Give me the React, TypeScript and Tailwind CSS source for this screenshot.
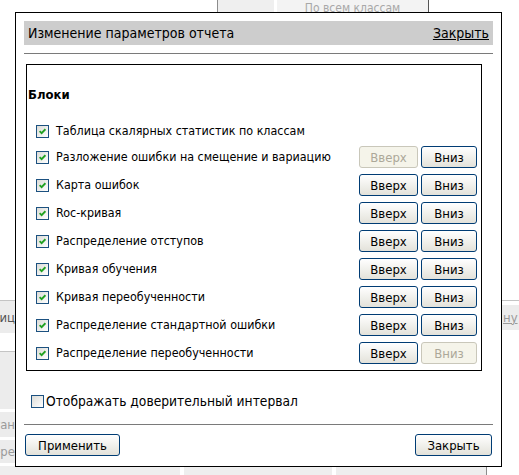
import clsx from "clsx";

type Block = {
  label: string;
  buttons: boolean;
  upDisabled?: boolean;
  downDisabled?: boolean;
};

const blocks: Block[] = [
  { label: "Таблица скалярных статистик по классам", buttons: false },
  { label: "Разложение ошибки на смещение и вариацию", buttons: true, upDisabled: true },
  { label: "Карта ошибок", buttons: true },
  { label: "Roc-кривая", buttons: true },
  { label: "Распределение отступов", buttons: true },
  { label: "Кривая обучения", buttons: true },
  { label: "Кривая переобученности", buttons: true },
  { label: "Распределение стандартной ошибки", buttons: true },
  { label: "Распределение переобученности", buttons: true, downDisabled: true },
];

function CheckBox({ checked }: { checked: boolean }) {
  return (
    <span className="flex h-[13px] w-[13px] shrink-0 items-center justify-center border border-[#1c5180] bg-linear-to-br from-[#dcdcd7] to-white">
      {checked && (
        <svg width="7" height="7" viewBox="0 0 7 7">
          <path d="M0.6 3.2 L2.6 5.2 L6.4 1.2" stroke="#21a121" strokeWidth="1.8" fill="none" />
        </svg>
      )}
    </span>
  );
}

function XpButton({ label, disabled, className }: { label: string; disabled?: boolean; className: string }) {
  return (
    <button
      className={clsx(
        "flex h-[22px] items-center justify-center rounded-[3px] border text-[13px] leading-none",
        disabled
          ? "border-[#c9c7ba] bg-[#f5f4ea] text-[#aca899]"
          : "border-[#003c74] bg-linear-to-b from-white to-[#e3e2da] text-black",
        className
      )}
    >
      {label}
    </button>
  );
}

function Background() {
  return (
    <div className="flex h-full flex-col">
      <div className="flex h-[12px] shrink-0">
        <div className="w-[217px]" />
        <div className="w-px bg-[#8c8c8c]" />
        <div className="w-[56px] bg-[#efefef]" />
        <div className="w-[3px]" />
        <div className="flex w-[151px] justify-center overflow-hidden bg-[#f3f3f3] pt-[1px] text-[12px] leading-[14px] text-[#a8a8a8]">
          По всем классам
        </div>
        <div className="w-px bg-[#555555]" />
      </div>
      <div className="flex flex-1">
        <div className="flex w-[15px] flex-col">
          <div className="h-[288px]" />
          <div className="h-px bg-[#c4c4c4]" />
          <div className="flex h-[32px] items-center justify-end overflow-hidden whitespace-nowrap bg-[#ececec] pt-[2px] text-[13px] text-[#555555]">
            Таблиц
          </div>
          <div className="h-[18px]" />
          <div className="h-px bg-[#c4c4c4]" />
          <div className="h-[57px] bg-[#ececec]" />
          <div className="h-[3px]" />
          <div className="flex h-[25px] items-center justify-end overflow-hidden whitespace-nowrap bg-[#ececec] text-[13px] text-[#9a9a9a]">
            Стан
          </div>
          <div className="h-[3px]" />
          <div className="flex h-[23px] items-center justify-end overflow-hidden whitespace-nowrap bg-[#ececec] text-[13px] text-[#9a9a9a]">
            пере
          </div>
        </div>
        <div className="flex-1" />
        <div className="flex w-[18px] flex-col">
          <div className="h-[288px]" />
          <div className="h-px bg-[#c4c4c4]" />
          <div className="h-[4px]" />
          <div className="flex h-[25px] items-center overflow-hidden whitespace-nowrap bg-[#ececec] pl-[2px] text-[13px] text-[#9a9a9a] underline">
            ну
          </div>
        </div>
      </div>
      <div className="flex h-[9px] shrink-0">
        <div className="w-[180px] bg-[#eeeeee]" />
        <div className="w-[4px]" />
        <div className="w-[148px] bg-[#eeeeee]" />
        <div className="w-[4px]" />
        <div className="w-[150px] bg-[#eeeeee]" />
        <div className="w-px bg-[#8c8c8c]" />
      </div>
    </div>
  );
}

export default function App() {
  return (
    <div className="relative h-[475px] w-[519px] overflow-hidden bg-white font-['DejaVu_Sans',sans-serif] text-[12.4px] text-black [font-stretch:condensed]">
      <Background />

      <div className="absolute left-[15px] top-[12px] flex h-[455px] w-[487px] flex-col border border-black bg-white px-[8px]">
        <div className="mt-[8px] flex h-[24px] shrink-0 items-center justify-between bg-[#cdcdcd] px-[4px] text-[14px]">
          <span>Изменение параметров отчета</span>
          <span className="underline">Закрыть</span>
        </div>
        <div className="mt-[8px] h-px shrink-0 bg-[#7a7a7a]" />

        <div className="ml-[2px] mt-[10px] flex h-[307px] w-[456px] shrink-0 flex-col border border-black pl-[1px] pt-[22px]">
          <div className="h-[16px] text-[13px] font-bold leading-[16px]">Блоки</div>
          <div className="mt-[19px] flex flex-col gap-[6px]">
            {blocks.map((b) => (
              <div key={b.label} className={clsx("flex items-center", b.buttons ? "h-[22px]" : "h-[18px]")}>
                <span className="ml-[8px]">
                  <CheckBox checked />
                </span>
                <span className="ml-[7px] whitespace-nowrap">{b.label}</span>
                {b.buttons && (
                  <div className="ml-auto mr-[4px] flex gap-[3px]">
                    <XpButton label="Вверх" disabled={b.upDisabled} className="w-[59px]" />
                    <XpButton label="Вниз" disabled={b.downDisabled} className="w-[56px]" />
                  </div>
                )}
              </div>
            ))}
          </div>
        </div>

        <div className="mt-[22px] flex h-[16px] shrink-0 items-center">
          <span className="ml-[7px]">
            <CheckBox checked={false} />
          </span>
          <span className="ml-[2px] text-[13.7px]">Отображать доверительный интервал</span>
        </div>
        <div className="mt-[15px] h-px shrink-0 bg-[#7a7a7a]" />
        <div className="mt-[9px] flex shrink-0 justify-between px-[1px]">
          <XpButton label="Применить" className="w-[95px]" />
          <XpButton label="Закрыть" className="w-[77px]" />
        </div>
      </div>
    </div>
  );
}
